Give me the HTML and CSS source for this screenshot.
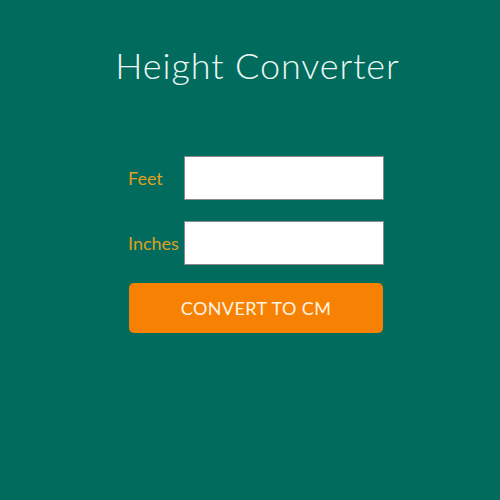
FILE: index.html
```html
<!DOCTYPE html>
<html>
<head>
<meta charset="utf-8">
<link rel="stylesheet" href="styles.css">
</head>
<body>
<div class="page">
  <h1 class="title">Height Converter</h1>
  <form class="form">
    <div class="row">
      <label class="label">Feet</label>
      <input class="field" type="text">
    </div>
    <div class="row">
      <label class="label">Inches</label>
      <input class="field" type="text">
    </div>
    <button class="btn" type="button">CONVERT TO CM</button>
  </form>
</div>
</body>
</html>
```
FILE: styles.css
```css
html, body {
  margin: 0;
  padding: 0;
  background: #016b5e;
  width: 500px;
  height: 500px;
  font-family: "Lato", "Open Sans", sans-serif;
}
.page {
  padding-top: 44px;
}
.title {
  margin: 0;
  padding-left: 15px;
  text-align: center;
  font-weight: 300;
  font-size: 36px;
  line-height: 42px;
  color: #eef7f3;
  letter-spacing: 0.9px;
}
.form {
  width: 256px;
  margin: 70px 0 0 128px;
  display: flex;
  flex-direction: column;
}
.row {
  display: flex;
  align-items: center;
  height: 44px;
  margin-bottom: 21px;
}
.row:nth-child(2) {
  margin-bottom: 18px;
}
.label {
  width: 56px;
  color: #dea024;
  font-size: 18px;
  font-weight: 400;
}
.field {
  box-sizing: border-box;
  width: 200px;
  height: 44px;
  margin: 0;
  border: 1px solid #8a8a8a;
  background: #fff;
  padding: 0 6px;
}
.btn {
  box-sizing: border-box;
  margin-left: 1px;
  width: 254px;
  height: 50px;
  border: none;
  border-radius: 5px;
  background: #f78102;
  color: #fdf2e4;
  font-family: inherit;
  font-size: 18px;
  font-weight: 400;
  letter-spacing: 0.4px;
  padding: 0;
}
```
